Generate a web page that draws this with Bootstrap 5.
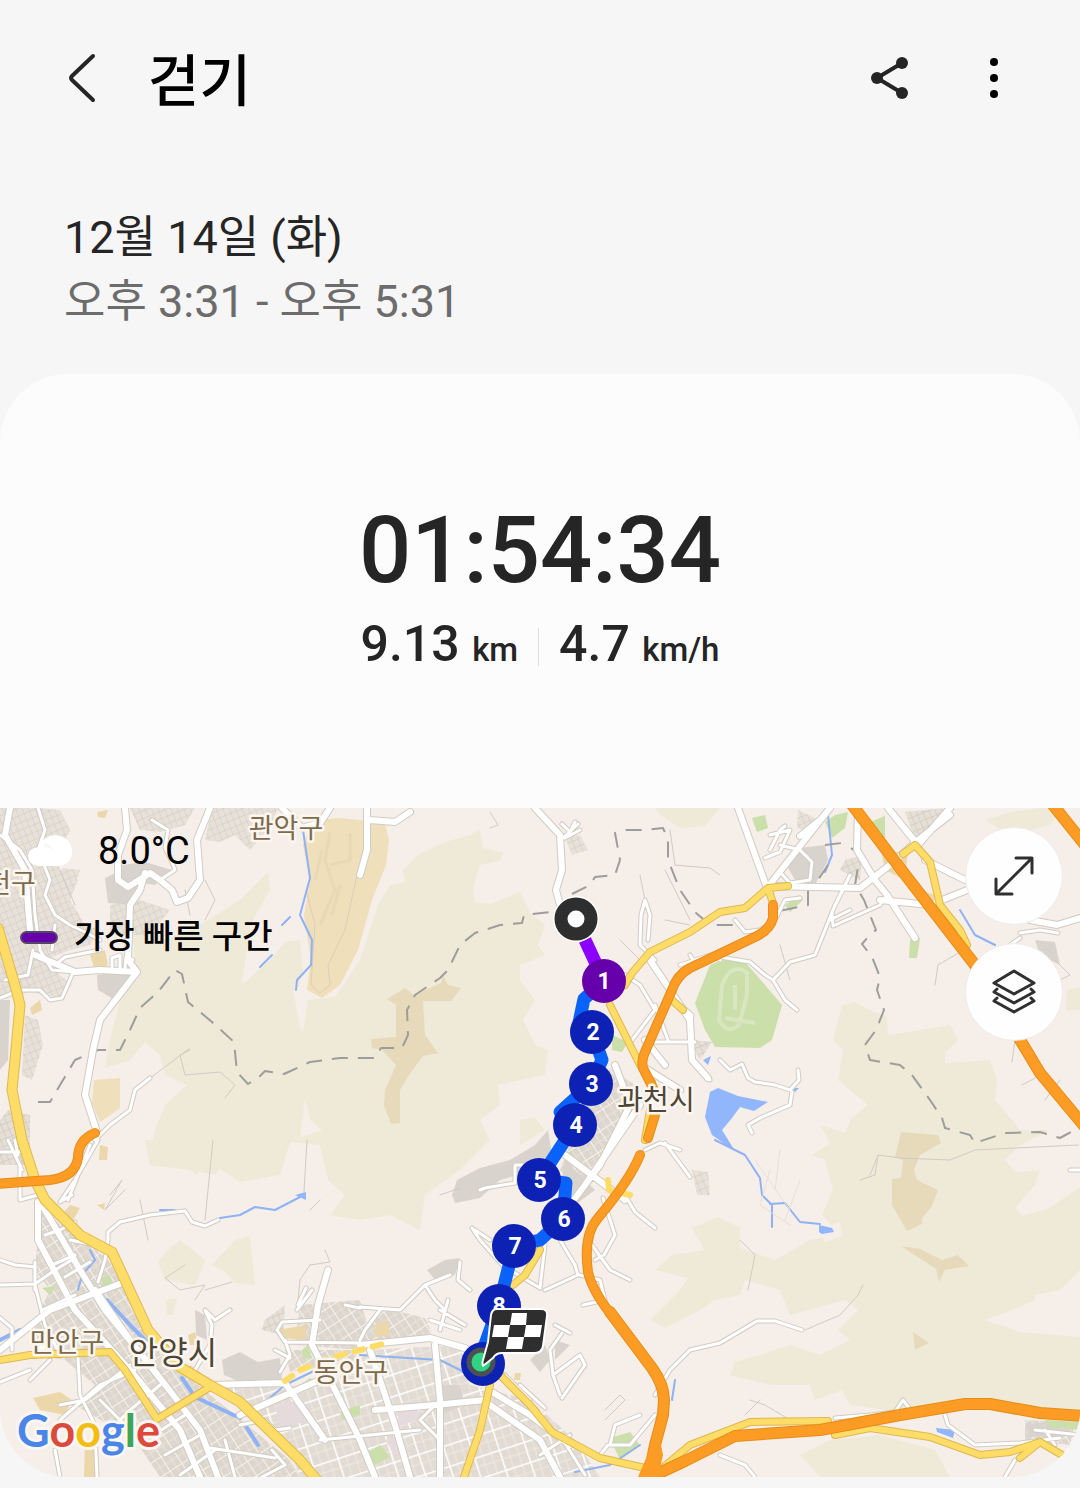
<!DOCTYPE html>
<html lang="ko">
<head>
<meta charset="utf-8">
<meta name="viewport" content="width=device-width, initial-scale=1">
<title>걷기</title>
<link href="https://cdn.jsdelivr.net/npm/bootstrap@5.3.0/dist/css/bootstrap.min.css" rel="stylesheet">
<style>
  body { background: #f6f6f6; color: #252525; font-family: Roboto, "Noto Sans CJK KR", sans-serif; }
  .app-header { padding: 30px 52px 32px 48px; }
  .app-title { font-size: 56px; line-height: 88px; padding-top: 8px; font-weight: 500; color: #000; }
  .icon-btn { width: 68px; height: 68px; padding: 0; border: 0; display: flex; align-items: center; justify-content: center; }
  .header-tools { gap: 36px; }
  .session { padding: 48px 64px 40px; font-size: 45px; line-height: 64px; }
  .session-time { color: #6c6c6c; }
  .workout { background: #fcfcfc; border-radius: 68px; overflow: hidden; margin-bottom: 11px; }
  .summary { padding: 121px 32px; font-weight: 500; }
  .duration { font-size: 92px; line-height: 112px; }
  .stats { gap: 20px; font-size: 50px; line-height: 74px; }
  .stats small { font-size: 33px; font-weight: 500; }
  .stat-rule { width: 1px; height: 38px; background: #dedede; }
  .map-svg { display: block; width: 100%; height: auto; background: #f6eee8; }
  .map-info { top: 16px; left: 20px; color: #000; }
  .weather { font-size: 38px; line-height: 54px; gap: 24px; margin-bottom: 32px; padding-left: 8px; }
  .legend { font-size: 33px; line-height: 54px; font-weight: 500; gap: 16px; }
  .legend-key { width: 38px; height: 13px; border-radius: 7px; background: #6500a8; border: 2px solid #55456b; }
  .map-tools { top: 19px; right: 17px; gap: 18px; }
  .tool-btn { width: 98px; height: 98px; padding: 0; border: 1px solid #efebe8; border-radius: 50%; background: #fefefe; display: flex; align-items: center; justify-content: center; }
  .ways { fill: none; stroke-linecap: round; stroke-linejoin: round; }
  .place { font-family: "Noto Sans CJK KR", sans-serif; font-weight: 400; paint-order: stroke; stroke: #fbf6f0; stroke-width: 5px; stroke-linejoin: round; text-anchor: middle; }
  .pin { font-family: Roboto, sans-serif; font-weight: 700; font-size: 23px; fill: #fff; text-anchor: middle; }
  .logo-word { font-family: Lato, sans-serif; font-weight: 700; font-size: 45px; paint-order: stroke; stroke: #faf6f2; stroke-width: 6px; stroke-linejoin: round; }
</style>
</head>
<body>
<header class="app-header d-flex align-items-center">
  <button class="btn icon-btn" type="button" aria-label="뒤로">
    <svg width="30" height="50" viewBox="0 0 30 50" fill="none" stroke="#252525" stroke-width="4" stroke-linecap="round" stroke-linejoin="round"><path d="M26 3 5 23q-2 2 0 4L26 47"/></svg>
  </button>
  <h1 class="app-title mb-0 ms-4 ps-2 me-auto">걷기</h1>
  <div class="header-tools d-flex">
    <button class="btn icon-btn" type="button" aria-label="공유">
      <svg width="40" height="44" viewBox="0 0 40 44"><path d="M32 7 7 22l25 15" fill="none" stroke="#252525" stroke-width="4"/><g fill="#252525"><circle cx="32" cy="7" r="6"/><circle cx="7" cy="22" r="6"/><circle cx="32" cy="37" r="6"/></g></svg>
    </button>
    <button class="btn icon-btn" type="button" aria-label="더보기">
      <svg width="12" height="44" viewBox="0 0 12 44"><circle cx="6" cy="6" r="4"/><circle cx="6" cy="22" r="4"/><circle cx="6" cy="38" r="4"/></svg>
    </button>
  </div>
</header>
<main>
  <section class="session">
    <div>12월 14일 (화)</div>
    <div class="session-time">오후 3:31 - 오후 5:31</div>
  </section>
  <section class="workout">
    <div class="summary text-center">
      <div class="duration">01:54:34</div>
      <div class="stats d-flex justify-content-center align-items-center">
        <div>9.13 <small class="ms-n1">km</small></div>
        <div class="stat-rule"></div>
        <div>4.7 <small>km/h</small></div>
      </div>
    </div>
    <div class="position-relative">
      <svg class="map-svg" viewBox="0 808 1080 669" role="img" aria-label="이동 경로 지도">
        <defs>
          <pattern id="blocks" width="17" height="14" patternUnits="userSpaceOnUse" patternTransform="rotate(57)"><rect width="17" height="14" fill="#dcd6cd"/><path d="M0 7H17M9 0V14" stroke="#eae5de" stroke-width="1"/><path d="M0 0H17M0 0V14" stroke="#f6f2ed" stroke-width="2"/></pattern>
          <pattern id="lanes" width="7" height="6" patternUnits="userSpaceOnUse" patternTransform="rotate(68)"><rect width="7" height="6" fill="#e6dfd6"/><path d="M0 0H7M0 0V6" stroke="#c9c1b6" stroke-width="1"/></pattern>
          <pattern id="city" width="26" height="21" patternUnits="userSpaceOnUse" patternTransform="rotate(-18)"><rect width="26" height="21" fill="#e1dbd3"/><path d="M0 10H26M9 0V21M18 0V21" stroke="#efeae4" stroke-width="1"/><path d="M0 0H26M0 0V21" stroke="#fff" stroke-width="3"/></pattern>
          <clipPath id="frame"><rect y="808" width="1080" height="669"/></clipPath>
          <path id="minor" d="M0 835 20 850 32 870 35 915 40 950 52 970 75 972 100 970M38 808 45 830 38 850 50 880 45 895 55 915 70 925 85 932 100 940M55 925 52 950M100 950 65 957 55 965M152 820 168 830 165 848 172 862 175 870 160 880M0 998 20 990 40 990 50 1000 62 998 72 975M5 980 28 975 33 950M112 970 112 958 120 955 120 968M125 968 126 957 133 960
            M150 1078 135 1090 130 1110 110 1125 95 1140M98 1140 75 1180 60 1202 72 1195M90 1145 82 1165 68 1200M108 1240 108 1232 120 1222 150 1215 185 1211 192 1222 205 1226 218 1220M108 1240 105 1260 98 1282M0 1260 15 1265 35 1267M35 1262 35 1290M0 1285 35 1284 55 1270 75 1258M20 1165 20 1200 38 1195M0 1152 20 1152M8 1140 22 1170M15 1140 18 1155
            M35 1285 45 1325 60 1355M30 1380 50 1360M0 1382 30 1370M78 1358 80 1395 95 1425M0 1318 12 1328 12 1350M95 1430 97 1477M60 1405 85 1400 130 1365M100 1400 140 1440M60 1420 100 1385 135 1370M45 1235 60 1230 75 1222M52 1265 75 1255M65 1277 90 1262M42 1310 75 1295M70 1240 95 1245M55 1450 60 1477
            M230 1310 215 1320 205 1310 212 1325 210 1345 195 1370M297 1310 312 1290M298 1305 306 1288M285 1340 290 1355 280 1372M277 1330 282 1322 320 1320M277 1330 285 1342M285 1342 360 1343M275 1350 290 1358M345 1305 360 1308M200 1385 285 1384M160 1385 130 1410 100 1440M150 1437 185 1415M165 1455 200 1435M180 1475 215 1450M240 1425 265 1420 275 1430 290 1428M210 1448 275 1458M225 1440 235 1477M272 1450 285 1465 262 1477
            M565 838 580 830M562 824 570 832 575 822M563 838 578 824M655 960 640 945 641 915 645 900 650 915 648 940M600 965 625 975 640 985 655 1010 632 1040M655 1005 668 1040M650 1042 695 1042M692 1060 710 1080M692 1060 690 1035 692 1015 675 1000
            M720 960 710 955 695 960 680 965M695 963 690 955M720 957 750 962 765 975 773 980 785 1000 797 1010M773 980 790 962 815 955 825 930 835 905 850 875M720 1060 730 1070 742 1064 748 1078 755 1082 775 1085 790 1090 799 1080 798 1070M792 1092 790 1105 760 1118 748 1125 752 1133M850 875 832 912 833 926 880 905 887 895M830 920 850 910M735 920 745 932 760 930 775 920 785 900 800 898M770 850 780 830 785 826M770 835 790 830 780 852 765 858M780 845 800 850 812 862 810 880 790 883 780 872M1020 933 1040 930 1058 933M1020 938 1010 945
            M680 1150 660 1143 645 1150M665 1143 690 1177M603 1198 615 1235 604 1255 595 1260M625 1195 635 1212 655 1228M592 1245 610 1270 630 1280M560 1240 575 1265 578 1275 545 1290M580 1275 600 1280 605 1300 583 1305M510 1270 540 1288 545 1245M472 1228 480 1240 505 1268M475 1230 490 1240M480 1190 485 1188 515 1183M515 1182V1165L540 1165
            M360 1307 400 1310 425 1285 450 1275M380 1310 365 1330 360 1340M425 1285 435 1300 445 1310M460 1262 458 1280 470 1290M448 1300 440 1330M440 1310 465 1325M430 1320 460 1330M555 1325 570 1333M562 1333 550 1350 553 1375 560 1395M553 1375 580 1355 585 1365 562 1398M520 1385 545 1408M505 1375 530 1400M440 1400 420 1420 440 1440M320 1440 420 1430M560 1435 585 1475M540 1455 570 1435
            M655 1395 670 1370 690 1350 720 1343M600 1455 608 1445 630 1445 655 1415M610 1445 615 1425 640 1415M720 1455 745 1465 755 1477M835 1418 870 1415 895 1412 903 1400 912 1412M945 1415 948 1425 975 1445 1020 1443 1060 1438M1035 1430 1080 1435M1045 1430 1055 1445M1015 1460 1005 1477M1070 1170H1080M720 1343 757 1321 775 1321 802 1330"/>
          <path id="major" d="M125 808 127 830 118 855 118 880 128 887 150 873 160 880 172 890 177 902 188 898 200 880 197 840 210 808M145 873 140 890 130 905 128 960 137 972 100 1020 93 1050 85 1095 97 1132M35 955 75 972 100 970 137 972M10 808 5 835 25 870 30 930M282 808 302 828 320 823 330 808M367 808 367 850 360 875M370 820 395 822 410 812M820 820 800 836
            M535 808 560 835 562 870 556 890 560 905M738 808 767 888 830 808M768 886 860 888 890 865 918 840 950 815M888 808 918 845 950 808M858 808 857 850 875 880 887 895 915 938M880 900 930 905 967 890M925 860 965 880M650 960 690 1020 692 1060 708 1078M645 1068 680 1090M645 1040 665 1065M615 1065 630 1105 600 1165 570 1205M1030 920 1057 925 1080 918
            M38 1202 38 1240 75 1310 130 1370 180 1430 200 1477M42 1205 80 1270 105 1310 150 1365 200 1430 218 1477M95 1290 130 1340 165 1385M0 1350 50 1310 90 1295 125 1282M35 1355 50 1340M190 1370 210 1385 285 1383M240 1415 320 1380M328 1270 318 1305 312 1345 330 1380 360 1440 375 1477M285 1383 325 1440
            M360 1345 430 1338 465 1348 480 1358M370 1350 395 1425 410 1477M435 1345 440 1400 440 1477M375 1410 435 1405 485 1400M492 1392 530 1415 570 1445M490 1405 540 1440 560 1477M565 1155 625 1200M640 1105 585 1185M580 1130 560 1150"/>
          <path id="mid" d="M0 1360 30 1355 110 1352 125 1370 157 1419 210 1387M490 1385 480 1430 463 1480M500 1375 530 1405 552 1432 600 1458 645 1468M660 1470 690 1445 750 1422 828 1421M835 1435 870 1428 930 1437 980 1455 1010 1452 1040 1442 1062 1455M1020 1458 1040 1442M625 985 632 973 650 952 690 932 720 912 745 908 768 888 788 886M768 888 773 903M903 854 915 845 930 862 940 905 960 930 967 945M610 1005 640 1065 652 1082M672 1000 683 1010M540 1250 525 1275 513 1285M650 1110 645 1140"/>
          <path id="artery" d="M-2 928 15 985 20 1005 15 1060 12 1090 22 1140 35 1180 45 1200 80 1235 112 1252 125 1280 148 1330 180 1367 210 1385 240 1402 300 1460 317 1480"/>
          <path id="hwy" d="M850 802 900 868 975 965 1022 1043 1040 1073 1085 1127M1053 805 1085 845M610 1312 652 1368Q664 1385 664 1400L663 1415 655 1445 648 1480M655 1475 685 1461 735 1436 820 1430 900 1415 965 1404 990 1404 1040 1413 1085 1416"/>
          <path id="bypass" d="M773 905V918Q770 930 755 937L690 968Q677 975 672 990L645 1052Q641 1060 643 1068L655 1092M655 1115 648 1138M640 1155Q630 1180 598 1218 583 1235 588 1272 592 1290 610 1313M-5 1184 50 1180Q75 1177 78 1158 78 1140 95 1133"/>
        </defs>
        <g clip-path="url(#frame)">
        <!-- hills -->
        <g fill="#efead7">
          <path d="M105 1068 110 1040 120 1000 135 960 130 912 140 895 145 925 165 940 200 925 240 900 268 872 270 890 250 925 242 985 270 960 285 942 300 940 303 970 298 990 303 1033 308 1000 335 997 360 960 378 905 390 885 405 882 403 870 418 855 445 842 470 835 480 830 483 848 503 852 500 861 480 865 473 888 475 902 492 904 505 898 520 892 530 913 545 925 538 945 545 955 520 965 520 980 535 1000 523 1020 535 1045 548 1050 545 1075 530 1078 498 1085 500 1105 480 1120 490 1140 460 1170 425 1195 420 1230 390 1215 360 1220 330 1215 345 1195 328 1180 320 1145 290 1142 280 1175 240 1182 215 1165 195 1175 180 1155 150 1155 155 1130 165 1105 187 1085 165 1075 160 1055 145 1042 130 1060Z"/>
          <path d="M842 1005 855 1002 870 1010 887 1017 888 1035 920 1030 950 1025 958 1040 945 1053 945 1063 990 1060 997 1080 995 1100 1020 1130 1050 1130 1020 1145 1005 1160 1015 1172 1040 1170 1035 1185 1015 1208 1022 1216 1050 1208 1080 1187V1270L1060 1290 1035 1295 1035 1300 1000 1315 985 1320 1020 1332 1080 1337V1420L990 1400 900 1412 850 1405 842 1390 815 1400 810 1385 770 1385 730 1375 735 1362 760 1355 790 1345 820 1355 850 1340 838 1330 858 1310 845 1300 790 1315 780 1290 745 1280 740 1295 715 1300 700 1310 665 1328 650 1320 680 1290 688 1278 655 1270 672 1255 705 1250 692 1228 718 1217 740 1228 740 1248 775 1260 810 1240 840 1235 822 1215 833 1190 825 1160 812 1155 830 1143 820 1125 845 1133 852 1118 868 1105 850 1090 838 1080 843 1050 833 1040Z"/>
          <path d="M800 1455 830 1440 880 1435 935 1450 950 1477 820 1477ZM158 1262 170 1248 180 1240 205 1260 195 1285 165 1280ZM212 1265 235 1240 250 1236 255 1285 235 1283 225 1272ZM655 808H720L705 826 680 828 660 815ZM985 820 1010 812 1040 808H1062L1050 825 1010 835ZM1067 990 1080 987V1010L1065 1010ZM520 1120 535 1118 545 1130 520 1145ZM165 1300 177 1298 173 1315 167 1315Z"/>
          <path d="M145 1140 230 1140 235 1150 215 1175 190 1170 150 1165Z"/>
        </g>
        <g fill="#f6eee8"><path d="M293 990 303 985 305 1005 301 1033 297 1010ZM305 1098 310 1120 322 1130 300 1138ZM820 1230 840 1222 843 1236 825 1242Z"/></g>
        <g fill="#e6dabb"><path d="M387 999 405 988 414 995 441 983 443 975 448 985 461 988 451 1001 423 1001 425 1035 438 1053 423 1056 411 1072 400 1090 400 1123 391 1124 384 1105 385 1090 396 1065 382 1050 372 1048 371 1039 396 1037 396 1005ZM901 1132 938 1135 941 1143 920 1155 914 1170 917 1180 938 1190 932 1206 922 1218 922 1224 907 1231 892 1205 892 1179 901 1178 903 1160 895 1157ZM901 1246 920 1249 942 1260 958 1255 969 1266 945 1270 939 1282 936 1269ZM913 1332 929 1343 915 1350Z"/></g>
        <path fill="#efdfbb" d="M313 820 340 818 385 823 389 840 386 865 372 900 358 950 340 985 322 998 307 990 311 960 304 915 310 880 303 845ZM94 1080 120 1078 120 1108 100 1122 92 1103Z"/>
        <path fill="none" stroke="#e8d9b4" stroke-width="3" d="M330 832 325 860 335 890 320 925M350 833V860L330 865M340 885 332 915M322 850 315 880"/>
        <path fill="none" stroke="#dccfb5" stroke-width="1" d="M306 890 315 925 311 985 320 993 330 985 328 965 345 930 358 870"/>
        <!-- built-up areas -->
        <g fill="url(#lanes)"><path d="M0 808H38L48 830 60 870 78 880 70 900 85 925 100 930 90 945 70 950 45 960 60 975 72 985 60 998 30 992 0 1000ZM38 808 60 810 70 830 60 850 48 845ZM130 808H195L185 825 160 832 140 830ZM212 808H278L268 830 250 850 235 835 220 842 205 840ZM62 868 80 870 75 885 60 880ZM25 1015 38 1020 43 1045 32 1080 22 1075ZM565 838 580 835 588 850 572 855ZM692 1170 708 1172 710 1195 697 1195ZM798 810 815 818 805 830 797 828ZM110 905 140 900 170 910 150 935 110 935Z" opacity=".85"/><path d="M8 1110 30 1115 30 1165 0 1165V1120ZM690 1040 712 1042 700 1060ZM905 812 925 810 950 808 915 840ZM845 860 862 855 860 880 840 870ZM265 1320 285 1305 283 1335 262 1330Z"/></g>
        <g fill="url(#blocks)"><path d="M40 1210 85 1240 110 1262 130 1300 170 1350 180 1370 290 1460 300 1477H160L135 1440 75 1405 95 1385 65 1360 35 1355 35 1320 50 1290 35 1270ZM300 1305 360 1300 372 1340 360 1350 295 1345ZM362 1330 380 1307 425 1318 435 1340 360 1345ZM610 1068 635 1085 625 1120 600 1170 580 1190 560 1170 580 1120Z"/><path d="M1025 1420 1075 1422 1070 1445 1025 1440ZM285 1350 350 1350 360 1360 290 1372Z"/></g>
        <path fill="url(#city)" d="M215 1387 290 1385 330 1385 370 1350 460 1345 470 1385 530 1400 575 1440 600 1477H300L290 1450Z"/>
        <g fill="#d8d4cd"><path d="M105 878 125 868 140 875 132 905 108 903ZM122 865 145 862 172 870 155 885 122 880ZM97 975 135 970 115 1000 98 990ZM0 1000 10 1000 8 1060 0 1070ZM452 1195 457 1180 480 1168 510 1160 535 1145 548 1130 552 1155 530 1172 500 1180 480 1198 455 1203ZM427 1270 445 1260 460 1258 455 1275 435 1280ZM788 868 800 848 825 845 828 860 815 885 795 880ZM222 1360 240 1352 258 1362 280 1358 282 1380 240 1382 224 1375ZM1035 940 1055 942 1060 965 1040 955ZM1025 1425 1045 1422 1078 1435 1030 1437ZM440 1385 460 1385 465 1405 440 1415ZM195 1310 205 1315 207 1340 196 1335ZM530 1360 545 1345 550 1360 540 1372ZM555 1340 570 1345 555 1360ZM565 1160 595 1190 575 1205 560 1190Z"/></g>
        <g fill="#cbdfaa"><path d="M695 1003 710 965 728 958 745 962 765 985 782 1005 772 1040 760 1048 715 1047 705 1030ZM825 822 835 815 848 812 845 828 832 838ZM752 818 765 815 768 828 757 832ZM910 940 920 938 917 958 909 958ZM102 1278 110 1275 114 1290 103 1290ZM612 1035 628 1042 622 1052 612 1050ZM362 1456 380 1445 390 1457 368 1468ZM290 1392 310 1378 316 1382 295 1395ZM302 1350 308 1345 312 1358 303 1358ZM610 1438 630 1432 640 1445 620 1460ZM785 905 800 895 803 900 790 912ZM340 1412 360 1405 360 1415 342 1420ZM1045 1420 1080 1422 1078 1430 1050 1427ZM870 822 885 816 885 840ZM42 1288 55 1286 50 1295ZM565 1155 572 1150 572 1165Z"/></g>
        <path fill="none" stroke="#d9e6c0" stroke-width="4" d="M722 985q10-24 25-12v22l-8 30q-12 10-20-5ZM735 985v25M725 1018l30 5"/>
        <g fill="#ebd7a9"><path d="M70 1205 80 1208 72 1222 62 1215ZM33 1398 60 1392 72 1400 65 1415 40 1410ZM97 812 108 810 105 818 98 817ZM90 955 105 950 108 965 95 970ZM97 1205 105 1203 104 1210ZM375 1325 387 1320 390 1335 375 1337ZM188 1335 195 1332 198 1345H190ZM85 1440H95V1477H84ZM882 855 908 850 905 880 885 870ZM277 1330 307 1325 305 1340 282 1338ZM515 1373 521 1373 520 1380 514 1380ZM100 1145 108 1147 107 1160H99ZM30 1008 40 1000 42 1010 32 1015ZM920 890 935 895 930 905Z"/></g>
        <g fill="#e6dbdc"><path d="M275 1405 300 1400 312 1420 280 1428ZM385 1440 400 1435 410 1452 395 1455ZM395 1405 415 1400 420 1420 400 1425Z"/></g>
        <g fill="#91b6fb"><path d="M710 1092 718 1088 738 1096 768 1102 754 1111 740 1107 732 1118 722 1130 735 1151 712 1135 705 1117ZM295 1195 306 1192 306 1200ZM819 1225 832 1228 834 1232 822 1234 819 1232ZM936 1428 955 1430 953 1438 937 1432ZM703 1060 711 1056 708 1065ZM792 1088 799 1088 795 1092Z"/></g>
        <g class="ways" stroke="#8fb2f4" stroke-width="2"><path d="M303 830 310 878 300 915 312 940 311 965 297 980 296 990M290 917 282 925M272 955 260 967M160 1210 175 1210M220 1218 240 1215 255 1207 275 1210 300 1197M90 1250 95 1260 82 1275 78 1290M715 1140 745 1155 760 1178 762 1195 772 1205 772 1227M770 1204 785 1203 800 1222 820 1224M828 815 832 855 825 872M960 910 975 935 995 945M575 1472 610 1465 640 1445M675 1380 672 1400M265 1402 285 1385 320 1368M360 1355 440 1360 470 1375"/><path stroke-width="4" d="M0 1340 20 1330M45 1312 85 1297M107 1300 130 1325 150 1345M182 1378 195 1397 240 1418M245 1425 258 1445"/></g>
        <!-- trails and minor lanes -->
        <g class="ways" stroke="#d0cbc5" stroke-width="1">
          <path d="M190 1050 180 1055 185 1075 220 1072 235 1085 225 1098M190 1048 145 1082M213 1140 205 1220M307 1140 304 1192M185 1265 165 1278 180 1290 205 1285 195 1300M205 1290 232 1282M310 1265 300 1280 298 1300M325 1250 330 1262 310 1265M60 870 75 905M110 1195 122 1180 105 1210 125 1190M140 1200 148 1240M640 875 645 900M670 830 675 865 710 868 720 875M805 1330 840 1315 858 1295 863 1285M750 1400 765 1405 790 1420M745 1415 760 1400M860 1180 875 1175 878 1155 900 1158 950 1160 975 1150 1078 1145M877 1158 870 1175M935 985 938 965 955 955 970 945M1015 1040 1012 1062M1060 1080 1045 1100M1022 1085 1035 1078M780 945 790 980M490 812 498 825 490 828M665 870 690 920M620 940 640 960M440 1195 460 1188M605 1420 625 1400 620 1395 605 1410M575 1100 555 1110M740 1240 755 1255 748 1290M205 880 215 900 205 920M185 890 190 915M665 920 690 925M1055 960 1070 975 1050 985M320 1200 310 1210"/>
          <path stroke="#e7e0d6" d="M755 1160 790 1210M770 1170 760 1205 790 1225M780 1150 775 1190M800 1180 785 1220"/>
        </g>
        <g fill="none" stroke="#9d9d9b" stroke-width="2" stroke-dasharray="16 10" stroke-linejoin="round">
          <path d="M38 1102 50 1102 60 1085 66 1075 75 1060 98 1050 120 1050 130 1030 140 1008 158 992 175 970 182 974 188 1002 212 1022 234 1042 237 1072 248 1084 258 1078 265 1071 284 1074 310 1062 340 1058 375 1058 381 1048 402 1048 408 1035 407 1010 415 995 440 978 448 970 460 945 475 933 500 925 522 923 524 915 550 912 575 905"/><path d="M572 894 590 885 595 877 615 875 620 860 615 833 625 830 645 830 663 828 668 840 668 860 680 890 695 912 710 925 735 925"/>
          <path d="M825 845 842 843M828 865 818 880M808 890V905L775 912M851 848 860 855 855 885 864 900 870 915 876 930 868 937 862 944 872 957 880 977 877 990 884 1010 876 1030 865 1045 870 1060 900 1065 912 1075 930 1100 942 1118 945 1128 970 1135 975 1143 1005 1133 1040 1132 1060 1138 1080 1127"/>
        </g>
        <!-- local roads: casing, then fill -->
        <g class="ways" stroke="#d0cbc4"><use href="#minor" stroke-width="5"/><use href="#major" stroke-width="8"/></g>
        <g class="ways" stroke="#fff"><use href="#minor" stroke-width="3"/><use href="#major" stroke-width="6"/></g>
        <!-- main roads -->
        <g class="ways" stroke="#dfb752"><use href="#mid" stroke-width="8"/><use href="#artery" stroke-width="11"/></g>
        <g class="ways" stroke="#fddd67"><use href="#mid" stroke-width="6"/><use href="#artery" stroke-width="9"/><path stroke-width="6" stroke-dasharray="9 10" d="M285 1381 300 1370 330 1358 360 1350 390 1342"/><path stroke-width="6" d="M608 1180 609 1190 630 1195"/></g>
        <!-- expressways -->
        <g class="ways" stroke="#e58d17"><use href="#hwy" stroke-width="12"/><use href="#bypass" stroke-width="10"/></g>
        <g class="ways" stroke="#fd9c24"><use href="#hwy" stroke-width="10"/><use href="#bypass" stroke-width="8"/></g>
        <path fill="#fd9c24" d="M658 1430 663 1455 658 1477H638Z"/>
        <!-- place names -->
        <g class="place" fill="#7d6b4c" font-size="27">
          <text x="286" y="838">관악구</text><text x="11" y="893">천구</text><text x="67" y="1352">만안구</text><text x="351" y="1382">동안구</text>
        </g>
        <g class="place" fill="#4f4635"><text x="656" y="1110" font-size="28">과천시</text><text x="173" y="1364" font-size="32">안양시</text></g>
        <!-- route -->
        <g fill="none" stroke-width="13" stroke-linejoin="round" stroke-linecap="round">
          <path stroke="#0b62fb" d="M604 981 584 999 577 1032H592L602 1060 591 1084 560 1112 575 1125 539 1180 566 1183 563 1219 540 1240 514 1246 499 1305 483 1350"/>
          <path stroke="#8b00ff" stroke-linecap="butt" d="M585 940 604 981"/>
        </g>
        <g fill="#0d22b5"><circle cx="592" cy="1032" r="22"/><circle cx="591" cy="1084" r="22"/><circle cx="575" cy="1125" r="22"/><circle cx="539" cy="1180" r="22"/><circle cx="563" cy="1219" r="22"/><circle cx="514" cy="1246" r="22"/><circle cx="499" cy="1306" r="22"/><circle cx="483" cy="1364" r="22"/></g>
        <circle cx="604" cy="981" r="22" fill="#6500aa"/>
        <g class="pin"><text x="604" y="989">1</text><text x="593" y="1040">2</text><text x="592" y="1092">3</text><text x="576" y="1133">4</text><text x="540" y="1188">5</text><text x="564" y="1227">6</text><text x="515" y="1254">7</text><text x="499" y="1314">8</text></g>
        <circle cx="576" cy="919" r="23" fill="#fff"/><circle cx="576" cy="919" r="15" fill="#fff" stroke="#2e2e2e" stroke-width="13"/>
        <circle cx="481" cy="1362" r="12" fill="#2fd381" stroke="#4a5054" stroke-width="5"/>
        <path fill="#2e2e2e" stroke="#fff" stroke-width="2" stroke-linejoin="round" d="M497 1309H541q7 0 6 7l-4 30q-1 7-8 7H502q-6 0-9 5L483 1366q-1-3 0-6l5-18 3-27q1-6 6-6Z"/>
        <path fill="#fff" d="M512 1313H527L526 1325H510ZM494 1325H510L508 1337H492ZM526 1325H542L540 1337H524ZM508 1337H524L522 1349H506Z"/>
        <text class="logo-word" x="17" y="1447"><tspan fill="#4a86e8">G</tspan><tspan fill="#dc4a3d">o</tspan><tspan fill="#f3bd13">o</tspan><tspan fill="#4a86e8">g</tspan><tspan fill="#3da458">l</tspan><tspan fill="#dc4a3d">e</tspan></text>
        </g>
      </svg>
      <div class="map-info position-absolute">
        <div class="weather d-flex align-items-center">
          <svg width="46" height="32" viewBox="0 0 46 32"><path fill="#fff" d="M10 31q-9-1-10-9 0-9 11-10Q15 1 27 0q14 1 17 14 1 14-12 17Z"/><path fill="#f8f6f4" d="M16 12q8 0 11 6Q22 8 17 8Z"/></svg>
          <span>8.0°C</span>
        </div>
        <div class="legend d-flex align-items-center"><span class="legend-key"></span><span>가장 빠른 구간</span></div>
      </div>
      <div class="map-tools position-absolute d-flex flex-column">
        <button class="tool-btn" type="button" aria-label="지도 확대">
          <svg width="42" height="42" viewBox="0 0 42 42" fill="none" stroke="#303030" stroke-width="3" stroke-linecap="round" stroke-linejoin="round"><path d="M4 38 38 4M23 3H39V18M3 24V39H19"/></svg>
        </button>
        <button class="tool-btn" type="button" aria-label="지도 유형">
          <svg width="46" height="48" viewBox="0 0 46 48" fill="none" stroke="#303030" stroke-width="3" stroke-linecap="round" stroke-linejoin="round"><path d="M23 3 43 15 23 26 3 15ZM6 21 3 24 23 35 43 24 40 21M6 30 3 33 23 44 43 33 40 30"/></svg>
        </button>
      </div>
    </div>
  </section>
</main>
<script src="https://cdn.jsdelivr.net/npm/bootstrap@5.3.0/dist/js/bootstrap.bundle.min.js"></script>
</body>
</html>
